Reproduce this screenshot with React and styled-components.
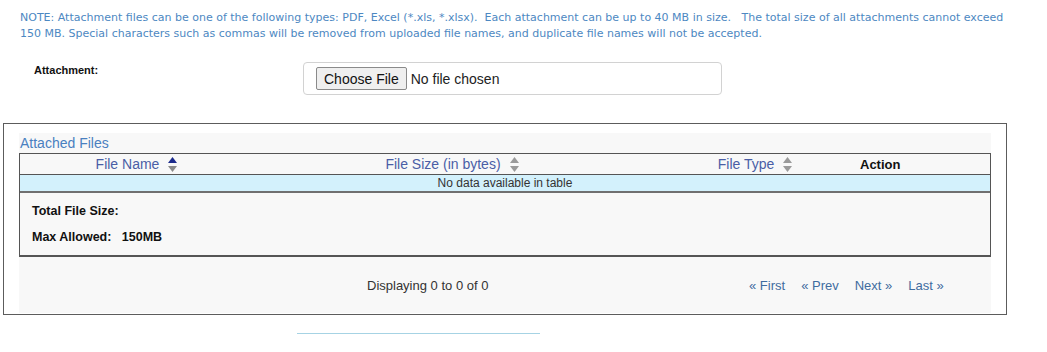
import React from 'react'
import styled, { createGlobalStyle } from 'styled-components'

const GlobalStyle = createGlobalStyle`
body {
	margin: 0;
	background: #fff;
	font-family: "Liberation Sans", Arial, sans-serif;
	color: #222;
}
`

const Page = styled.div`
width: 1047px;
height: 352px;
overflow: hidden;
`

const Note = styled.div`
padding: 10px 20px 0 20px;
font-family: "DejaVu Sans", Verdana, sans-serif;
font-size: 11px;
line-height: 16px;
color: #4d88c2;
white-space: pre;
`

const AttachRow = styled.div`
display: flex;
align-items: flex-start;
margin-top: 20px;
`

const FieldLabel = styled.label`
width: 303px;
padding-left: 34px;
box-sizing: border-box;
padding-top: 2px;
font-size: 11px;
font-weight: bold;
color: #111;
`

const FileBox = styled.div`
width: 419px;
height: 33px;
box-sizing: border-box;
border: 1px solid #d2d2d2;
border-radius: 4px;
display: flex;
align-items: center;
padding-left: 12px;
`

const FileInput = styled.input`
font-family: "Liberation Sans", Arial, sans-serif;
font-size: 14px;
color: #222;
&::file-selector-button {
	font-family: "Liberation Sans", Arial, sans-serif;
	font-size: 14px;
	height: 23px;
	padding: 0 7px;
	margin-right: 4px;
	border: 1px solid #8a8a8a;
	border-radius: 2px;
	background: #efefef;
	color: #111;
}
`

const Panel = styled.div`
margin: 28px 0 0 3px;
width: 1004px;
box-sizing: border-box;
border: 1px solid #5c5c5c;
background: #fff;
padding: 9px 15px 1px 15px;
`

const Inner = styled.div`
background: #f8f8f8;
`

const Title = styled.div`
font-size: 14px;
line-height: 20px;
color: #4a80c0;
padding-left: 1px;
`

const Table = styled.div`
border: 1px solid #555;
border-bottom-width: 2px;
`

const HeadRow = styled.div`
display: grid;
grid-template-columns: 233px 398px 208px 1fr;
height: 20px;
align-items: center;
border-bottom: 1px solid #555;
`

const HeadCell = styled.div`
display: flex;
align-items: center;
justify-content: ${p => (p.left ? 'flex-start' : 'center')};
padding-left: ${p => (p.left ? '1px' : '0')};
gap: 9px;
font-size: ${p => (p.bold ? '13px' : '14px')};
font-weight: ${p => (p.bold ? 'bold' : 'normal')};
color: ${p => (p.bold ? '#111' : '#4a5ea6')};
`

const EmptyRow = styled.div`
height: 16px;
line-height: 16px;
background: #d3f1fc;
text-align: center;
font-size: 12px;
color: #333;
border-bottom: 2px solid #707070;
`

const Summary = styled.div`
padding: 11px 12px 11px 12px;
display: flex;
flex-direction: column;
gap: 12px;
`

const SummaryLine = styled.div`
font-size: 12.5px;
font-weight: bold;
line-height: 14px;
color: #111;
white-space: pre;
`

const Footer = styled.div`
height: 56px;
display: flex;
align-items: center;
padding-left: 348px;
`

const Info = styled.div`
width: 382px;
font-size: 13px;
color: #333;
`

const Pager = styled.div`
display: flex;
gap: 16px;
`

const PageLink = styled.a`
font-size: 13px;
color: #3f6c9f;
text-decoration: none;
cursor: pointer;
`

const Divider = styled.div`
margin: 18px 0 0 297px;
width: 243px;
height: 1px;
background: #a6d3e4;
`

const SortIcon = ({ active }) => (
	<svg width="9" height="15" viewBox="0 0 9 15">
		<polygon points="4.5,0 9,6 0,6" fill={active ? '#1c2b8c' : '#9a9a9a'} />
		<polygon points="0,9 9,9 4.5,15" fill={active ? '#8a8a8a' : '#9a9a9a'} />
	</svg>
)

const columns = [
	{ name: 'File Name', active: true },
	{ name: 'File Size (in bytes)' },
	{ name: 'File Type' },
]

const App = () => {
	return (
		<Page>
			<GlobalStyle />
			<Note>
				{'NOTE: Attachment files can be one of the following types: PDF, Excel (*.xls, *.xlsx).  Each attachment can be up to 40 MB in size.   The total size of all attachments cannot exceed'}
				<br />
				{'150 MB. Special characters such as commas will be removed from uploaded file names, and duplicate file names will not be accepted.'}
			</Note>

			<AttachRow>
				<FieldLabel htmlFor="attachment">Attachment:</FieldLabel>
				<FileBox>
					<FileInput type="file" id="attachment" />
				</FileBox>
			</AttachRow>

			<Panel>
				<Inner>
					<Title>Attached Files</Title>
					<Table>
						<HeadRow>
							{columns.map(col => (
								<HeadCell key={col.name}>
									<span>{col.name}</span>
									<SortIcon active={col.active} />
								</HeadCell>
							))}
							<HeadCell left bold>Action</HeadCell>
						</HeadRow>
						<EmptyRow>No data available in table</EmptyRow>
						<Summary>
							<SummaryLine>Total File Size:</SummaryLine>
							<SummaryLine>{'Max Allowed:   150MB'}</SummaryLine>
						</Summary>
					</Table>
					<Footer>
						<Info>Displaying 0 to 0 of 0</Info>
						<Pager>
							<PageLink>« First</PageLink>
							<PageLink>« Prev</PageLink>
							<PageLink>Next »</PageLink>
							<PageLink>Last »</PageLink>
						</Pager>
					</Footer>
				</Inner>
			</Panel>

			<Divider />
		</Page>
	)
}

export default App
